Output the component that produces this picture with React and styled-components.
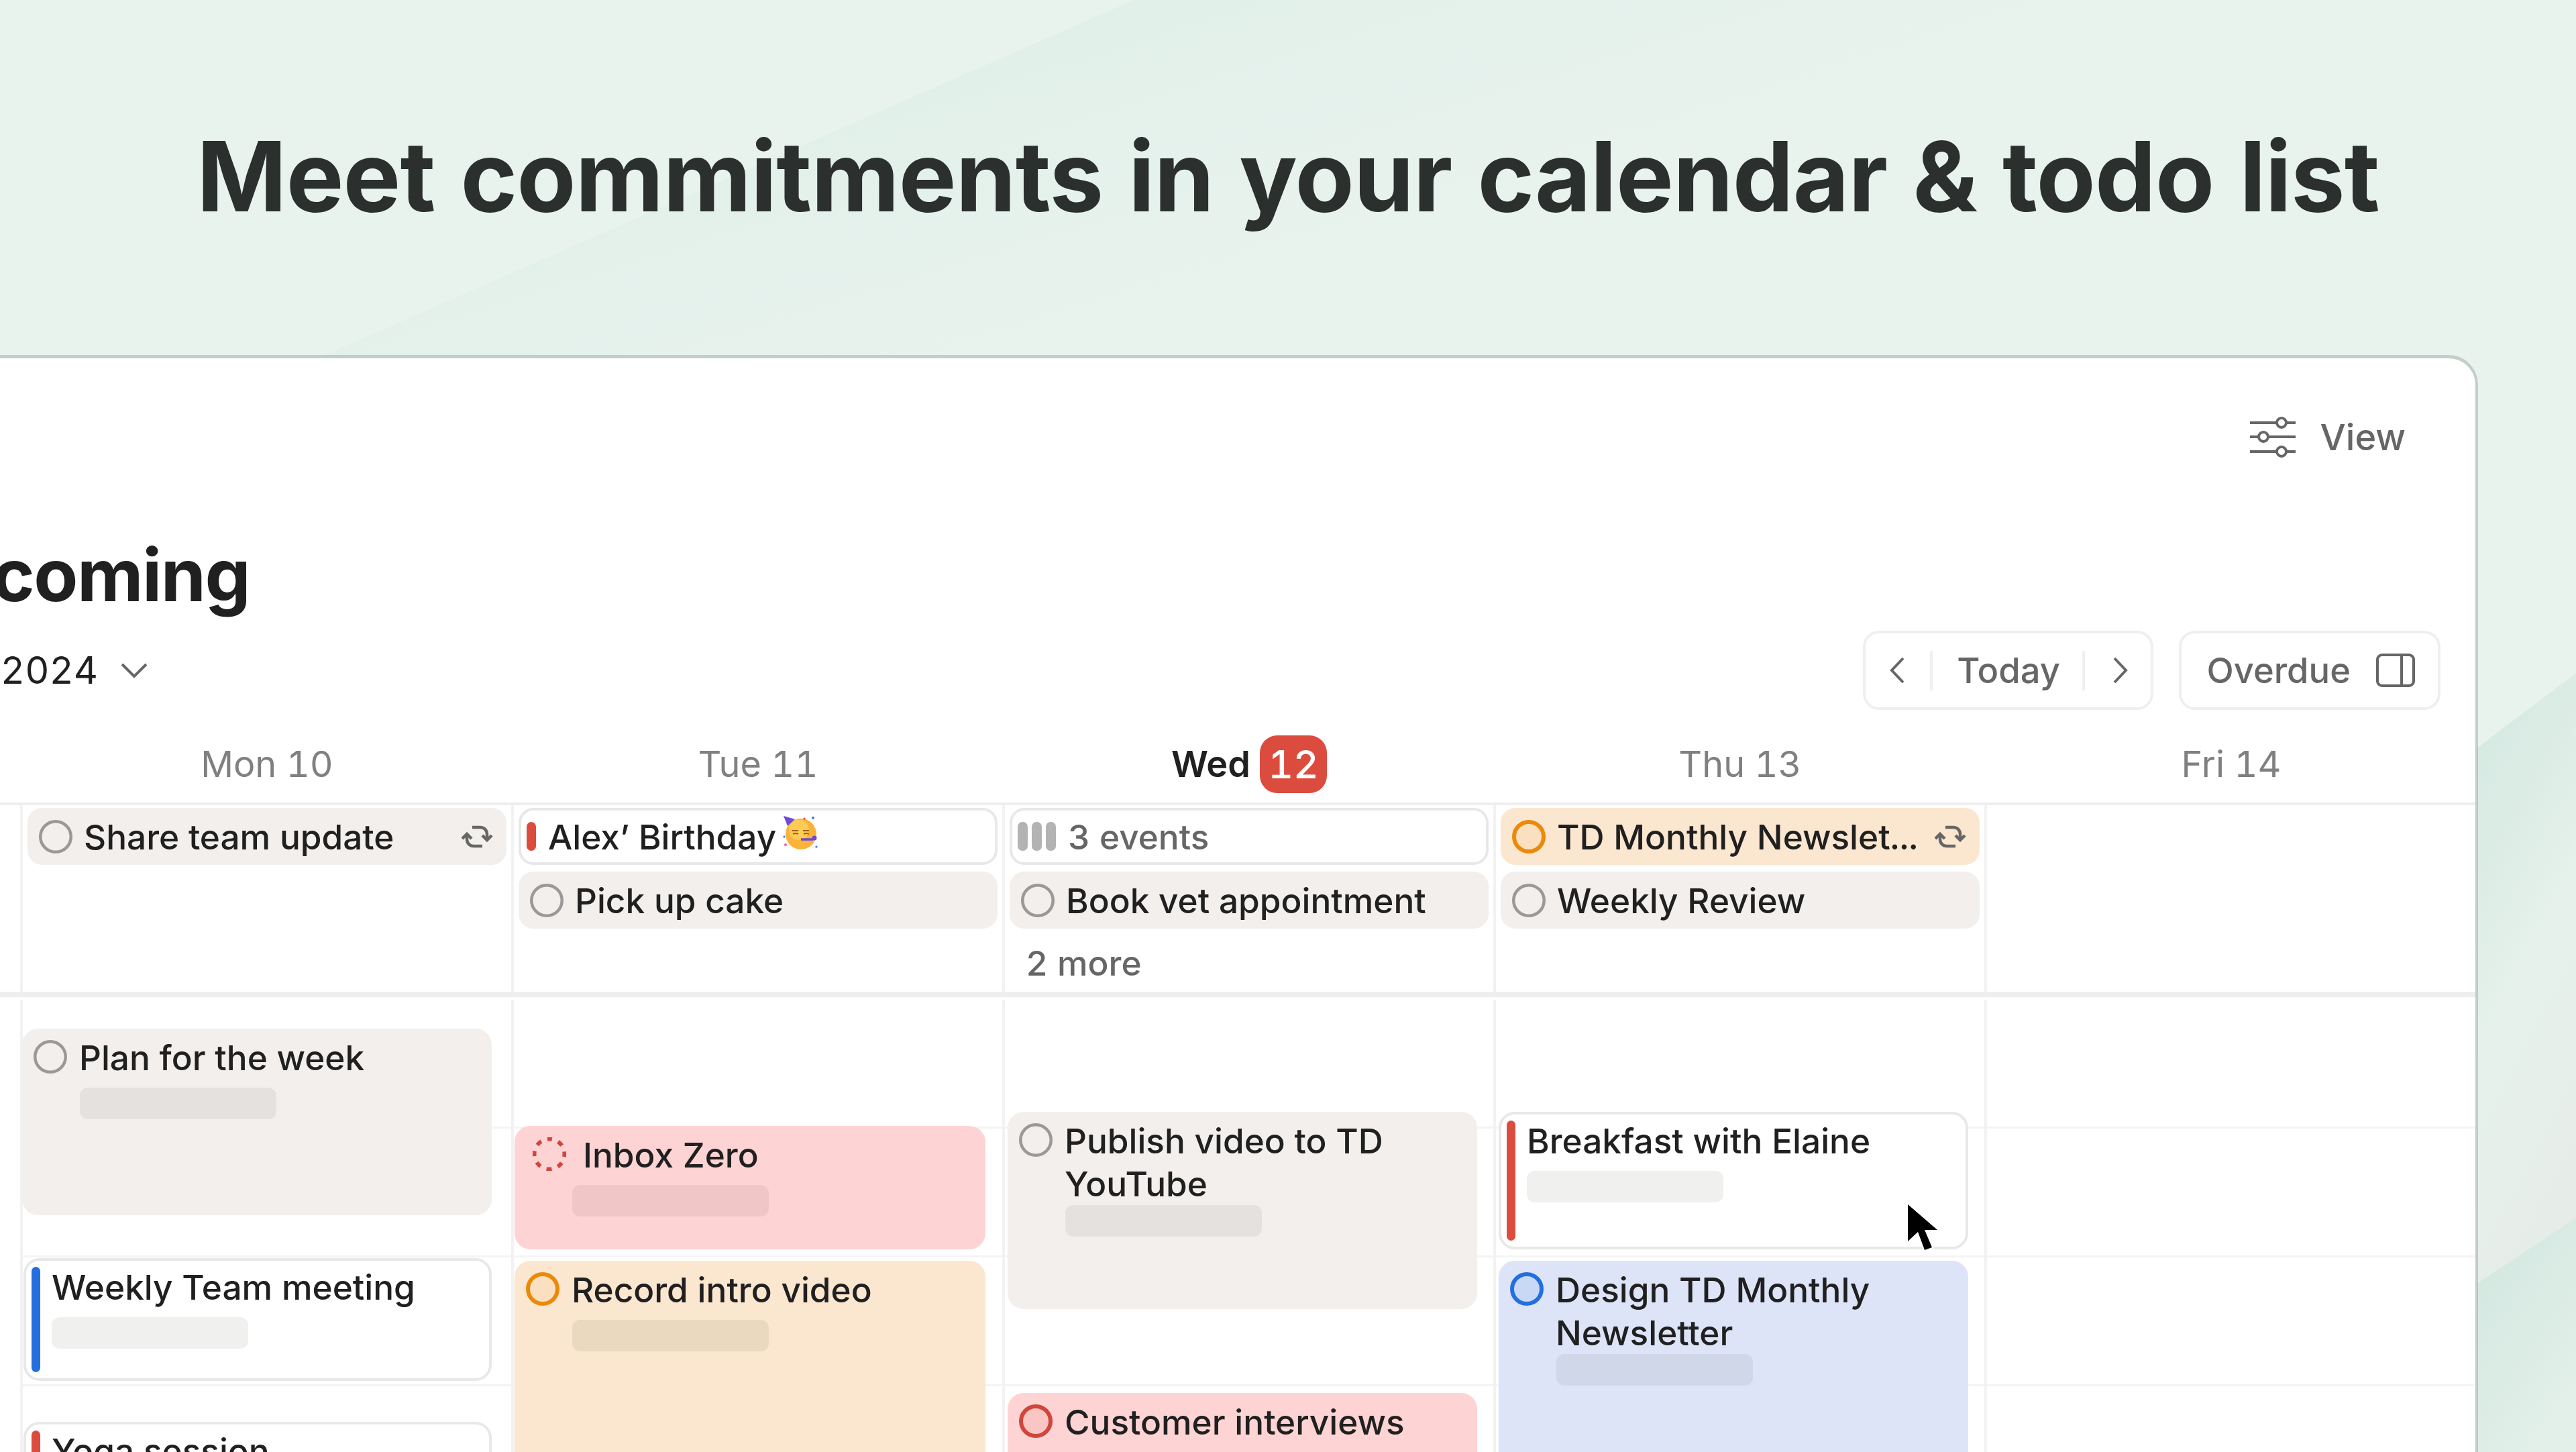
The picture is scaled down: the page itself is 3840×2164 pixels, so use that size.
import React from 'react';
import styled, { createGlobalStyle } from 'styled-components';

const GlobalStyle = createGlobalStyle`
  html, body {
    margin: 0;
    padding: 0;
    background: #e9f3ee;
  }
  * {
    box-sizing: border-box;
  }
`;

const tones = {
  gray: { bg: '#f2efed', slot: '#e4e1df', ring: '#999999', fill: 'none', stroke: 4.5 },
  red: { bg: '#fed3d3', slot: '#f0c6c6', ring: '#d1453b', fill: '#fac6c4', stroke: 6 },
  orange: { bg: '#fbe6cf', slot: '#ead8bf', ring: '#eb8909', fill: '#fadfc0', stroke: 6 },
  blue: { bg: '#dde4f7', slot: '#d0d7e9', ring: '#246fe0', fill: '#c9d9f5', stroke: 6 },
  white: { bg: '#ffffff', slot: '#f0f0ef', ring: '#999999', fill: 'none', stroke: 4.5 },
};

const Page = styled.div`
  position: relative;
  width: 3840px;
  height: 2164px;
  overflow: hidden;
  background: #e9f3ee;
  font-family: Inter, "Liberation Sans", sans-serif;
  font-variant-numeric: tabular-nums;
  color: #202020;
`;

const Backdrop = styled.svg`
  position: absolute;
  inset: 0;
`;

const Hero = styled.header`
  position: relative;
  height: 529px;
  display: flex;
  align-items: center;
  justify-content: center;
  padding-bottom: 3px;
`;

const Headline = styled.h1`
  margin: 0;
  font-size: 144px;
  line-height: 170px;
  font-weight: 680;
  letter-spacing: -0.8px;
  color: #2b2f2d;
  white-space: nowrap;
`;

const Window = styled.main`
  position: relative;
  width: 3899px;
  height: 1700px;
  margin-left: -205px;
  background: #fff;
  background-clip: padding-box;
  border: 5px solid rgba(30, 45, 40, 0.18);
  border-right-width: 4px;
  border-radius: 44px 44px 0 0;
`;

const TopBar = styled.div`
  height: 234px;
  display: flex;
  align-items: center;
  justify-content: flex-end;
  gap: 36px;
  padding-right: 104px;
  font-size: 54px;
  font-weight: 500;
  color: #666;
`;

const PageTitle = styled.h2`
  margin: 0;
  padding-left: 44px;
  height: 172px;
  font-size: 108px;
  line-height: 178px;
  font-weight: 700;
  letter-spacing: -1.5px;
  color: #202020;
`;

const DateRow = styled.div`
  height: 118px;
  display: flex;
  align-items: center;
  justify-content: space-between;
  padding: 0 52px 0 55px;
`;

const MonthPicker = styled.div`
  display: flex;
  align-items: center;
  gap: 34px;
  font-size: 56px;
  color: #202020;
`;

const Controls = styled.div`
  display: flex;
  gap: 38px;
`;

const ControlBox = styled.div`
  height: 118px;
  display: flex;
  align-items: center;
  border: 4px solid #efefef;
  border-radius: 24px;
  font-size: 52.5px;
  font-weight: 500;
  color: #666;
`;

const ArrowCell = styled.div`
  width: ${(p) => p.$w}px;
  display: flex;
  justify-content: center;
  padding-left: ${(p) => p.$pad || 0}px;
`;

const ControlDivider = styled.div`
  width: 4px;
  height: 59px;
  background: #f0f0f0;
`;

const TodayLabel = styled.div`
  width: 223px;
  padding-left: 4px;
  text-align: center;
`;

const OverdueBox = styled(ControlBox)`
  gap: 38px;
  padding: 0 34px 0 38px;
`;

const WeekHeader = styled.div`
  height: 142px;
  display: grid;
  grid-template-columns: 230px repeat(5, 732px);
  border-bottom: 4px solid #eeeeee;
`;

const DayLabel = styled.div`
  display: flex;
  align-items: center;
  justify-content: center;
  gap: 14px;
  padding: 23px 0 0 4px;
  height: 138px;
  font-size: 54px;
  font-weight: ${(p) => (p.$today ? 600 : 400)};
  color: ${(p) => (p.$today ? '#202020' : '#808080')};
`;

const TodayBadge = styled.span`
  width: 100px;
  height: 86px;
  display: flex;
  align-items: center;
  justify-content: center;
  background: #dc4c3e;
  border-radius: 26px;
  color: #fff;
  font-size: 58px;
  font-weight: 500;
`;

const AllDayRow = styled.div`
  height: 286px;
  display: grid;
  grid-template-columns: 230px repeat(5, 732px);
  border-bottom: 8px solid #eeeeee;
`;

const AllDayColumn = styled.div`
  display: flex;
  flex-direction: column;
  gap: 10px;
  padding: 4px 7px 0;
  border-left: 4px solid #f2f2f2;
`;

const Chip = styled.div`
  height: 85px;
  display: flex;
  align-items: center;
  gap: ${(p) => p.$gap ?? 17}px;
  padding: 0 19px 0 ${(p) => p.$inset ?? 17}px;
  background: ${(p) => tones[p.$tone].bg};
  border: ${(p) => (p.$tone === 'white' ? '4px solid #e8e8e8' : 'none')};
  border-radius: 22px;
  font-size: 51.3px;
  font-weight: 550;
  white-space: nowrap;
  color: ${(p) => p.$color || '#202020'};
`;

const ChipLabel = styled.span`
  flex: 1;
`;

const Tick = styled.span`
  flex: none;
  width: ${(p) => p.$w || 14}px;
  height: 43px;
  background: ${(p) => p.$color};
  border-radius: 7px;
`;

const Ticks = styled.span`
  display: flex;
  gap: 6px;
`;

const MoreLink = styled.div`
  height: 82px;
  display: flex;
  align-items: center;
  padding-left: 24px;
  font-size: 51.3px;
  font-weight: 550;
  color: #666;
`;

const TimeGrid = styled.div`
  margin-top: 4px;
  display: grid;
  grid-template-columns: 230px repeat(5, 732px);
`;

const DayColumn = styled.div`
  height: 680px;
  display: flex;
  flex-direction: column;
  align-items: flex-start;
  border-left: 4px solid #f2f2f2;
  background: repeating-linear-gradient(to bottom, transparent 0 189px, #f4f4f4 189px 192px);
`;

const CalEvent = styled.div`
  flex: none;
  width: ${(p) => p.$w || 700}px;
  height: ${(p) => p.$h}px;
  margin-top: ${(p) => p.$top}px;
  margin-left: ${(p) => p.$x}px;
  padding-top: 11px;
  background: ${(p) => tones[p.$tone].bg};
  border-radius: 24px;
`;

const TaskRow = styled.div`
  display: flex;
  align-items: flex-start;
  gap: ${(p) => p.$gap ?? 18}px;
  min-height: 77px;
  padding-left: ${(p) => p.$inset ?? 17}px;
`;

const TaskTitle = styled.div`
  font-size: 51.3px;
  line-height: 64px;
  font-weight: 550;
  color: #202020;
`;

const RingSlot = styled.svg`
  flex: none;
  margin-top: ${(p) => p.$mt ?? 6}px;
`;

const Slot = styled.div`
  width: 293px;
  height: 47px;
  margin-left: ${(p) => p.$x ?? 86}px;
  background: ${(p) => tones[p.$tone].slot};
  border-radius: 12px;
`;

const MeetingEvent = styled.div`
  flex: none;
  display: flex;
  gap: 17px;
  width: ${(p) => p.$w || 700}px;
  height: ${(p) => p.$h}px;
  margin-top: ${(p) => p.$top}px;
  margin-left: ${(p) => p.$x}px;
  padding: 9px 0 9px 8px;
  background: #fff;
  border: 4px solid #e8e8e8;
  border-radius: 24px;
`;

const MeetingBar = styled.div`
  flex: none;
  width: 13px;
  background: ${(p) => p.$color};
  border-radius: 7px;
`;

const MeetingBody = styled.div`
  margin-top: -2px;
`;

const MeetingTitle = styled(TaskTitle)`
  min-height: 77px;
`;

const Pointer = styled.svg`
  position: absolute;
  left: 2830px;
  top: 1781px;
`;

function Ring({ tone = 'gray', dashed, mt }) {
  const t = tones[tone];
  return (
    <RingSlot width="50" height="50" viewBox="0 0 50 50" $mt={mt}>
      {dashed ? (
        <circle cx="25" cy="25" r="22.5" fill="none" stroke={t.ring} strokeWidth="6" strokeDasharray="8 9.67" strokeDashoffset="4" transform="rotate(-90 25 25)" />
      ) : (
        <circle cx="25" cy="25" r={25 - t.stroke / 2} fill={t.fill} stroke={t.ring} strokeWidth={t.stroke} />
      )}
    </RingSlot>
  );
}

function RepeatIcon() {
  return (
    <svg width="48" height="34" viewBox="0 0 48 34" fill="none" stroke="#666" strokeWidth="4.5" style={{ flex: 'none' }}>
      <path d="M16 3H28a10 10 0 0 1 10 10V21" />
      <path d="M31 15l7 7 7-7" />
      <path d="M31 31H18a10 10 0 0 1-10-10V14" />
      <path d="M1 20l7-7 7 7" />
    </svg>
  );
}

function SlidersIcon() {
  return (
    <svg width="70" height="62" viewBox="0 0 70 62" fill="none" stroke="#666" strokeWidth="4">
      <path d="M1 10H41M55 10H69M1 31H14M28 31H69M1 53H41M55 53H69" />
      <circle cx="48" cy="10" r="7" />
      <circle cx="21" cy="31" r="7" />
      <circle cx="48" cy="53" r="7" />
    </svg>
  );
}

function Chevron({ dir }) {
  const d = { left: 'M20 2L3 20l17 18', right: 'M3 2l17 18L3 38', down: 'M2 3l18 18L38 3' }[dir];
  const size = dir === 'down' ? [40, 24] : [23, 40];
  return (
    <svg width={size[0]} height={size[1]} viewBox={`0 0 ${size[0]} ${size[1]}`} fill="none" stroke="#666" strokeWidth="4">
      <path d={d} />
    </svg>
  );
}

function PanelIcon() {
  return (
    <svg width="58" height="50" viewBox="0 0 58 50" fill="none" stroke="#666" strokeWidth="4">
      <rect x="2" y="2" width="54" height="46" rx="7" />
      <path d="M38 2V48" />
    </svg>
  );
}

function PartyFace() {
  return (
    <svg width="54" height="52" viewBox="0 0 54 52" style={{ flex: 'none', marginLeft: '-9px', marginTop: '-12px' }}>
      <circle cx="28" cy="28" r="23" fill="#fbb33a" />
      <circle cx="25" cy="22" r="15" fill="#ffd25c" opacity="0.8" />
      <path d="M2 1L19 6 8 16Z" fill="#6d4ad8" />
      <path d="M15 23h9M31 23h9M16 28q4-2 8 0M32 28q4-2 8 0" stroke="#a2601c" strokeWidth="2" fill="none" />
      <path d="M28 36h18" stroke="#6d4ad8" strokeWidth="3.5" />
      <circle cx="48" cy="34" r="3.5" fill="#6d4ad8" />
      <circle cx="5" cy="44" r="2" fill="#f0609a" />
      <circle cx="46" cy="4" r="2" fill="#3b78e0" />
      <circle cx="33" cy="5" r="1.6" fill="#e0483e" />
      <circle cx="51" cy="47" r="1.6" fill="#3b78e0" />
      <circle cx="3" cy="32" r="1.6" fill="#3b78e0" />
    </svg>
  );
}

function Task({ title, tone = 'gray', x, top, h, w, dashed, inset, gap, slotX }) {
  return (
    <CalEvent $tone={tone} $x={x} $top={top} $h={h} $w={w}>
      <TaskRow $inset={inset} $gap={gap}>
        <Ring tone={tone} dashed={dashed} />
        <TaskTitle>{title}</TaskTitle>
      </TaskRow>
      <Slot $tone={tone} $x={slotX} />
    </CalEvent>
  );
}

function Meeting({ title, color, x, top, h, w }) {
  return (
    <MeetingEvent $x={x} $top={top} $h={h} $w={w}>
      <MeetingBar $color={color} />
      <MeetingBody>
        <MeetingTitle>{title}</MeetingTitle>
        <Slot $tone="white" $x={0} />
      </MeetingBody>
    </MeetingEvent>
  );
}

const App = () => (
  <Page>
    <GlobalStyle />
    <Backdrop width="3840" height="2164" viewBox="0 0 3840 2164">
      <defs>
        <linearGradient id="sweep" x1="0.05" y1="0.5" x2="0.45" y2="0.7">
          <stop offset="0" stopColor="#e0efe9" />
          <stop offset="1" stopColor="#e9f3ee" />
        </linearGradient>
        <linearGradient id="edgeA" x1="0" y1="0" x2="0.3" y2="1">
          <stop offset="0" stopColor="#d2e8e0" />
          <stop offset="0.6" stopColor="#e6f1eb" />
          <stop offset="1" stopColor="#e6ede9" />
        </linearGradient>
        <linearGradient id="edgeB" x1="0" y1="0" x2="0.6" y2="1">
          <stop offset="0" stopColor="#d0e6de" />
          <stop offset="1" stopColor="#e3f0ea" />
        </linearGradient>
      </defs>
      <path d="M1690 0L478 532H3840V0Z" fill="url(#sweep)" />
      <path d="M3692 1115L3840 1003V1815L3692 1913Z" fill="url(#edgeA)" />
      <path d="M3692 1913L3840 1815V2164H3692Z" fill="url(#edgeB)" />
    </Backdrop>
    <Hero>
      <Headline>Meet commitments in your calendar &amp; todo list</Headline>
    </Hero>
    <Window>
      <TopBar>
        <SlidersIcon />
        <span>View</span>
      </TopBar>
      <PageTitle>Upcoming</PageTitle>
      <DateRow>
        <MonthPicker>
          <span>June 2024</span>
          <Chevron dir="down" />
        </MonthPicker>
        <Controls>
          <ControlBox>
            <ArrowCell $w={96}><Chevron dir="left" /></ArrowCell>
            <ControlDivider />
            <TodayLabel>Today</TodayLabel>
            <ControlDivider />
            <ArrowCell $w={98} $pad={8}><Chevron dir="right" /></ArrowCell>
          </ControlBox>
          <OverdueBox>
            <span>Overdue</span>
            <PanelIcon />
          </OverdueBox>
        </Controls>
      </DateRow>
      <WeekHeader>
        <div />
        <DayLabel>Mon 10</DayLabel>
        <DayLabel>Tue 11</DayLabel>
        <DayLabel $today>Wed <TodayBadge>12</TodayBadge></DayLabel>
        <DayLabel>Thu 13</DayLabel>
        <DayLabel>Fri 14</DayLabel>
      </WeekHeader>
      <AllDayRow>
        <div />
        <AllDayColumn>
          <Chip $tone="gray">
            <Ring mt={0} />
            <ChipLabel>Share team update</ChipLabel>
            <RepeatIcon />
          </Chip>
        </AllDayColumn>
        <AllDayColumn>
          <Chip $tone="white" $inset={8} $gap={18}>
            <Tick $color="#dc4c3e" />
            <span>Alex’ Birthday</span>
            <PartyFace />
          </Chip>
          <Chip $tone="gray">
            <Ring mt={0} />
            <ChipLabel>Pick up cake</ChipLabel>
          </Chip>
        </AllDayColumn>
        <AllDayColumn>
          <Chip $tone="white" $inset={8} $gap={18} $color="#666">
            <Ticks>
              <Tick $color="#b3b3b3" $w={15} />
              <Tick $color="#b3b3b3" $w={15} />
              <Tick $color="#b3b3b3" $w={15} />
            </Ticks>
            <ChipLabel>3 events</ChipLabel>
          </Chip>
          <Chip $tone="gray">
            <Ring mt={0} />
            <ChipLabel>Book vet appointment</ChipLabel>
          </Chip>
          <MoreLink>2 more</MoreLink>
        </AllDayColumn>
        <AllDayColumn>
          <Chip $tone="orange">
            <Ring tone="orange" mt={0} />
            <ChipLabel>TD Monthly Newslet...</ChipLabel>
            <RepeatIcon />
          </Chip>
          <Chip $tone="gray">
            <Ring mt={0} />
            <ChipLabel>Weekly Review</ChipLabel>
          </Chip>
        </AllDayColumn>
        <AllDayColumn />
      </AllDayRow>
      <TimeGrid>
        <div />
        <DayColumn>
          <Task title="Plan for the week" x={-1} top={43} h={278} />
          <Meeting title="Weekly Team meeting" color="#246fe0" x={1} top={64} h={183} w={698} />
          <Meeting title="Yoga session" color="#dc4c3e" x={1} top={61} h={183} w={698} />
        </DayColumn>
        <DayColumn>
          <Task title="Inbox Zero" tone="red" dashed x={1} top={188} h={184} w={702} inset={27} gap={25} />
          <Task title="Record intro video" tone="orange" x={1} top={17} h={400} w={702} />
        </DayColumn>
        <DayColumn>
          <Task title="Publish video to TD YouTube" x={4} top={167} h={294} />
          <Task title="Customer interviews" tone="red" x={4} top={125} h={200} />
        </DayColumn>
        <DayColumn>
          <Meeting title="Breakfast with Elaine" color="#dc4c3e" x={4} top={167} h={205} />
          <Task title="Design TD Monthly Newsletter" tone="blue" x={4} top={17} h={400} w={700} />
        </DayColumn>
        <DayColumn />
      </TimeGrid>
    </Window>
    <Pointer width="72" height="100" viewBox="0 0 72 100">
      <path d="M14 14L14 69 29 55 39 82 50 78 39 52 58 52Z" fill="#000" stroke="#fff" strokeWidth="5" strokeLinejoin="round" paintOrder="stroke" />
    </Pointer>
  </Page>
);

export default App;
